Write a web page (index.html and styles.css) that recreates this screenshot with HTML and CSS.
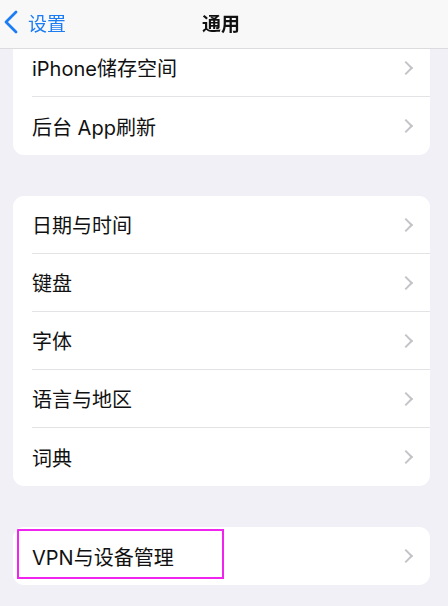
FILE: index.html
```html
<!DOCTYPE html>
<html lang="zh-CN">
<head>
    <meta charset="UTF-8">
    <meta name="viewport" content="width=device-width, initial-scale=1.0">
    <title>通用</title>
    <link rel="stylesheet" href="styles.css">
</head>
<body>
    <div class="nav">
        <div class="back">
            <svg class="back-icon" width="16" height="24" viewBox="0 0 16 24">
                <path d="M13 2 L3 12 L13 22" fill="none" stroke="#1c7cf4" stroke-width="2.8" stroke-linecap="round" stroke-linejoin="round"/>
            </svg>
            <span>设置</span>
        </div>
        <div class="title">通用</div>
    </div>

    <div class="content">
        <div class="group first">
            <div class="row"><span class="label">iPhone储存空间</span><span class="chev"></span></div>
            <div class="row"><span class="label">后台 App刷新</span><span class="chev"></span></div>
        </div>

        <div class="group">
            <div class="row"><span class="label">日期与时间</span><span class="chev"></span></div>
            <div class="row"><span class="label">键盘</span><span class="chev"></span></div>
            <div class="row"><span class="label">字体</span><span class="chev"></span></div>
            <div class="row"><span class="label">语言与地区</span><span class="chev"></span></div>
            <div class="row"><span class="label">词典</span><span class="chev"></span></div>
        </div>

        <div class="group">
            <div class="row marked">
                <span class="label">VPN与设备管理</span><span class="chev"></span>
                <div class="highlight"></div>
            </div>
        </div>
    </div>
</body>
</html>
```

FILE: styles.css
```css
body {
    margin: 0;
    background: #f1f0f6;
    font-family: "Inter", "Noto Sans CJK SC", sans-serif;
    color: #111;
    width: 448px;
    height: 606px;
    overflow: hidden;
}
.nav {
    position: fixed;
    top: 0;
    left: 0;
    right: 0;
    height: 48px;
    background: rgba(248, 248, 248, 0.97);
    border-bottom: 1px solid #dcdcdf;
    display: flex;
    align-items: center;
    justify-content: center;
    z-index: 2;
}
.back {
    position: absolute;
    left: 3px;
    top: 0;
    height: 48px;
    display: flex;
    align-items: center;
    gap: 9px;
    color: #1c7cf4;
    font-size: 19px;
    font-family: "Noto Sans CJK SC", sans-serif;
    margin-top: -2px;
}
.title {
    font-family: "Noto Sans CJK SC", sans-serif;
    font-size: 19px;
    font-weight: 600;
    margin-right: 6px;
    margin-top: -3px;
}
.content {
    padding: 39px 18px 0 13px;
    display: flex;
    flex-direction: column;
    gap: 41px;
}
.group {
    background: #fff;
    border-radius: 11px;
    overflow: hidden;
}
.row {
    position: relative;
    height: 58px;
    margin-left: 19px;
    padding-right: 19px;
    display: flex;
    align-items: center;
    justify-content: space-between;
    border-bottom: 1px solid #e3e3e6;
    box-sizing: border-box;
}
.row:last-child {
    border-bottom: none;
}
.label {
    font-size: 20px;
}
.chev {
    width: 8px;
    height: 8px;
    border-top: 2px solid #c4c4c8;
    border-right: 2px solid #c4c4c8;
    transform: rotate(45deg);
}
.highlight {
    position: absolute;
    left: -15px;
    top: 2px;
    width: 203px;
    height: 46px;
    border: 2px solid #f023ef;
}
```
